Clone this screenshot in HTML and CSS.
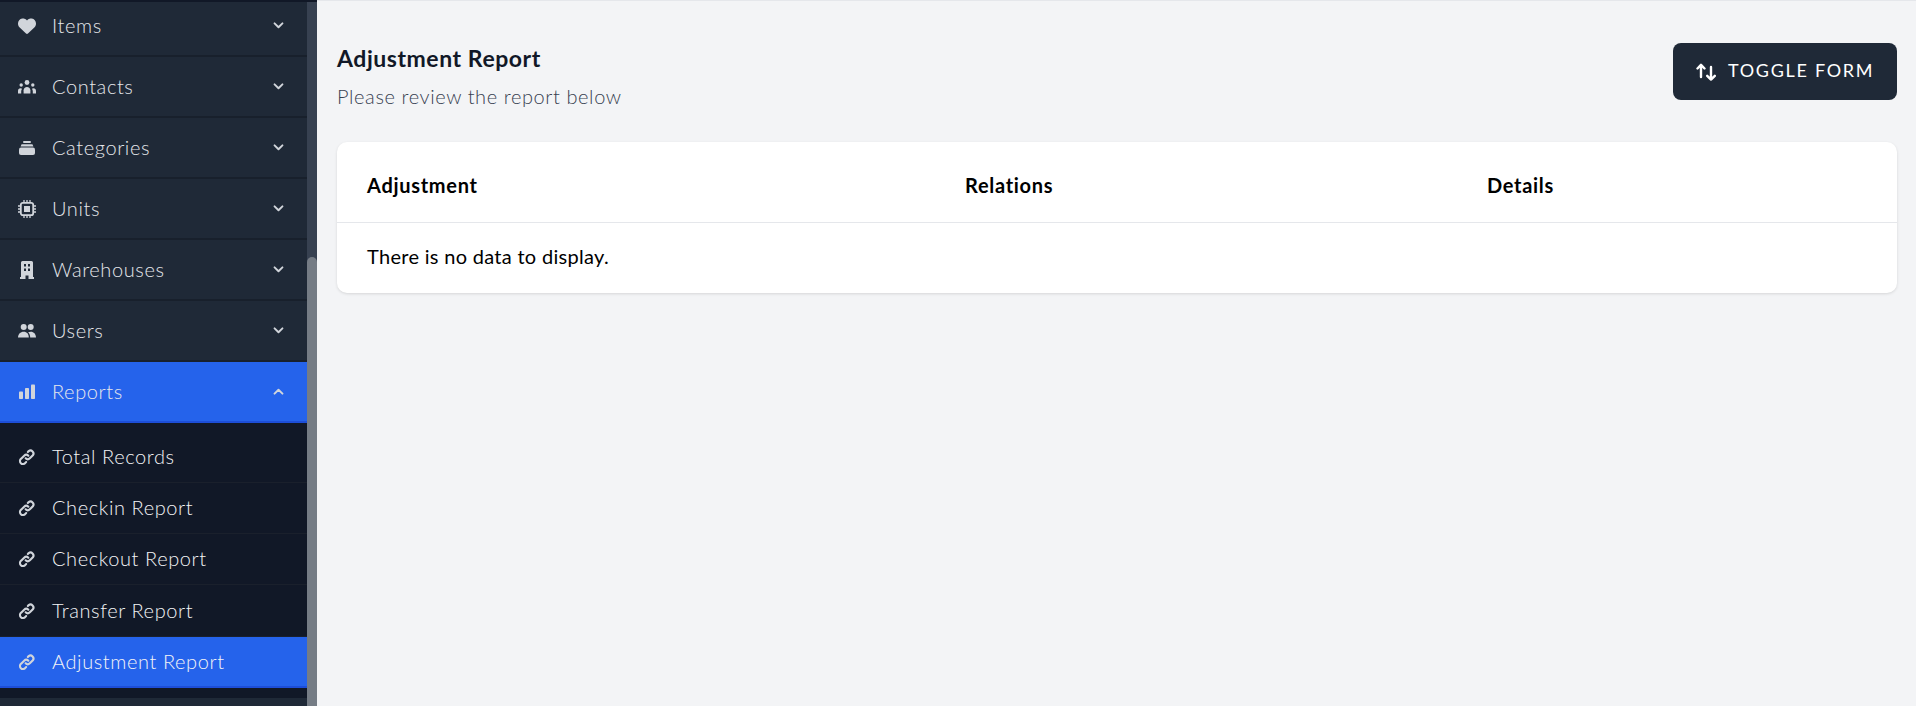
FILE: index.html
```html
<!DOCTYPE html>
<html lang="en">
<head>
    <meta charset="UTF-8">
    <title>Adjustment Report</title>
    <link rel="stylesheet" href="styles.css">
</head>
<body>
    <svg class="sprites" width="0" height="0">
        <symbol id="chev-down" viewBox="0 0 12 8"><path d="M1.500 1.500 6 6l4.500-4.500" fill="none" stroke="currentColor" stroke-width="2.200" stroke-linecap="round" stroke-linejoin="round"/></symbol>
        <symbol id="chev-up" viewBox="0 0 12 8"><path d="M1.500 6.500 6 2l4.500 4.500" fill="none" stroke="currentColor" stroke-width="2.200" stroke-linecap="round" stroke-linejoin="round"/></symbol>
        <symbol id="link" viewBox="0 0 24 24"><path d="M13.800 10.200a4 4 0 0 0-5.600 0l-4 4a4 4 0 1 0 5.600 5.600l1.100-1.100m-.7-4.900a4 4 0 0 0 5.600 0l4-4a4 4 0 0 0-5.600-5.600l-1.100 1.100" fill="none" stroke="currentColor" stroke-width="2.800" stroke-linecap="round"/></symbol>
    </svg>

    <!-- sidebar -->
    <aside class="sidebar">
        <nav class="menu">
            <a class="menu-item first">
                <svg class="icon" viewBox="0 0 512 512"><path fill="currentColor" d="M47.600 300.400L228.300 469.900c7.500 7 17.400 10.900 27.700 10.900s20.200-3.900 27.700-10.900L464.400 300.400c30.400-28.300 47.600-68 47.600-109.500v-5.800c0-69.900-50.500-129.500-119.400-141C347 36.500 300.600 51.400 268 84L256 96 244 84c-32.600-32.600-79-47.500-124.600-39.900C50.500 55.600 0 115.200 0 185.100v5.800c0 41.500 17.200 81.200 47.600 109.500z"/></svg>
                <span class="label">Items</span>
                <svg class="chev"><use href="#chev-down"/></svg>
            </a>
            <a class="menu-item">
                <svg class="icon" viewBox="0 0 18 18"><g fill="currentColor"><circle cx="9" cy="4.500" r="2.400"/><circle cx="3.200" cy="7" r="1.700"/><circle cx="14.800" cy="7" r="1.700"/><path d="M5.600 15.500v-3.200c0-2 1.500-3.400 3.400-3.400s3.400 1.400 3.400 3.400v3.200z"/><path d="M0 15.500v-2.600c0-1.600 1-2.700 2.400-2.700.7 0 1.200.2 1.700.5-.6.8-.9 1.700-.9 2.800v2z"/><path d="M18 15.500v-2.600c0-1.600-1-2.700-2.400-2.700-.7 0-1.200.2-1.700.5.6.8.9 1.700.9 2.800v2z"/></g></svg>
                <span class="label">Contacts</span>
                <svg class="chev"><use href="#chev-down"/></svg>
            </a>
            <a class="menu-item">
                <svg class="icon" viewBox="0 0 18 18"><g fill="currentColor"><rect x="5" y="2" width="8" height="2" rx="1"/><path d="M3.600 5.200h10.800l1 2.200H2.600z"/><rect x="1" y="8.400" width="16" height="7.600" rx="2"/></g></svg>
                <span class="label">Categories</span>
                <svg class="chev"><use href="#chev-down"/></svg>
            </a>
            <a class="menu-item">
                <svg class="icon" viewBox="0 0 18 18"><rect x="2.800" y="2.800" width="12.400" height="12.400" rx="2" fill="none" stroke="currentColor" stroke-width="1.800"/><rect x="6" y="6" width="6" height="6" fill="currentColor"/><path d="M6 0v2M9 0v2M12 0v2M6 16v2M9 16v2M12 16v2M0 6h2M0 9h2M0 12h2M16 6h2M16 9h2M16 12h2" stroke="currentColor" stroke-width="1.300"/></svg>
                <span class="label">Units</span>
                <svg class="chev"><use href="#chev-down"/></svg>
            </a>
            <a class="menu-item">
                <svg class="icon" viewBox="0 0 18 18"><path fill="currentColor" fill-rule="evenodd" d="M3 1.500A1.500 1.500 0 0 1 4.500 0h9A1.500 1.500 0 0 1 15 1.500V16h1v2h-5.500v-3.500h-3V18H2v-2h1zM6 3v2.500h2V3zm4 0v2.500h2V3zM6 7.500V10h2V7.500zm4 0V10h2V7.500z"/></svg>
                <span class="label">Warehouses</span>
                <svg class="chev"><use href="#chev-down"/></svg>
            </a>
            <a class="menu-item">
                <svg class="icon" viewBox="0 0 18 18"><g fill="currentColor"><circle cx="5.700" cy="5" r="3"/><circle cx="12.700" cy="5" r="3"/><path d="M0 15.500c0-3.400 2.400-5.700 5.700-5.700s5.100 2.300 5.100 5.700z"/><path d="M12.200 15.500c0-2.200-.8-4-2.100-5.200.8-.3 1.700-.5 2.700-.5 3 0 5.200 2.300 5.200 5.700z"/></g></svg>
                <span class="label">Users</span>
                <svg class="chev"><use href="#chev-down"/></svg>
            </a>
            <a class="menu-item active">
                <svg class="icon" viewBox="0 0 18 18"><g fill="currentColor"><rect x="1" y="8.500" width="4" height="7.500" rx=".8"/><rect x="7" y="5" width="4" height="11" rx=".8"/><rect x="13" y="1.500" width="4" height="14.500" rx=".8"/></g></svg>
                <span class="label">Reports</span>
                <svg class="chev"><use href="#chev-up"/></svg>
            </a>
            <div class="submenu">
                <a class="sub-item"><svg class="icon"><use href="#link"/></svg><span class="label">Total Records</span></a>
                <a class="sub-item"><svg class="icon"><use href="#link"/></svg><span class="label">Checkin Report</span></a>
                <a class="sub-item"><svg class="icon"><use href="#link"/></svg><span class="label">Checkout Report</span></a>
                <a class="sub-item tall"><svg class="icon"><use href="#link"/></svg><span class="label">Transfer Report</span></a>
                <a class="sub-item active"><svg class="icon"><use href="#link"/></svg><span class="label">Adjustment Report</span></a>
            </div>
        </nav>
        <div class="scroll-track"><div class="scroll-thumb"></div></div>
    </aside>

    <!-- page content -->
    <main class="content">
        <header class="page-head">
            <div>
                <h1>Adjustment Report</h1>
                <p>Please review the report below</p>
            </div>
            <button type="button" class="toggle-btn">
                <svg viewBox="0 0 20 18" width="20" height="18"><path d="M5 14V2M1.500 5.500 5 1.800l3.500 3.700M15 4v12.500M11.200 12.800 15 16.600l3.800-3.800" fill="none" stroke="currentColor" stroke-width="2.400" stroke-linecap="round" stroke-linejoin="round"/></svg>
                <span class="btn-text">TOGGLE FORM</span>
            </button>
        </header>

        <section class="card">
            <div class="table-head">
                <div>Adjustment</div>
                <div>Relations</div>
                <div>Details</div>
            </div>
            <div class="table-empty">There is no data to display.</div>
        </section>
    </main>
</body>
</html>
```

FILE: styles.css
```css
/* Reset */
* {
    margin: 0;
    padding: 0;
    box-sizing: border-box;
}

body {
    font-family: 'Lato', 'Open Sans', sans-serif;
    background-color: #f3f4f6;
    display: flex;
    height: 706px;
    overflow: hidden;
}

.sprites {
    position: absolute;
}

/* Sidebar */
.sidebar {
    width: 317px;
    flex-shrink: 0;
    display: flex;
    height: 706px;
    border-top: 2px solid #111827;
}

.menu {
    width: 307px;
    background-color: #1f2937;
    overflow: hidden;
}

.menu-item {
    display: flex;
    align-items: center;
    height: 61px;
    padding: 0 23px 0 18px;
    color: #e5e7eb;
    font-size: 20px;
    font-weight: 300;
    letter-spacing: 0.6px;
    border-bottom: 2px solid #18202c;
}

.menu-item .icon,
.sub-item .icon {
    color: #d1d5db;
}

.menu-item.first {
    height: 55px;
    padding-bottom: 6px;
}

.menu-item.active {
    background-color: #2563eb;
    border-bottom-color: #1d4ed8;
}

.icon {
    width: 18px;
    height: 18px;
    flex-shrink: 0;
    margin-right: 16px;
}

.label {
    flex: 1;
    margin-bottom: 2px;
}

.chev {
    width: 11px;
    height: 7px;
    color: #d1d5db;
}

.submenu {
    background-color: #111827;
    padding-bottom: 10px;
}

.sub-item {
    display: flex;
    align-items: center;
    height: 51px;
    padding: 0 18px;
    color: #f3f4f6;
    font-size: 20px;
    font-weight: 300;
    letter-spacing: 0.6px;
    border-bottom: 1px solid #1a202c;
}

.sub-item:first-child {
    height: 60px;
    padding-top: 8px;
}

.sub-item.tall {
    height: 52px;
}

.sub-item.active {
    background-color: #2563eb;
    border-bottom: 2px solid #1d4ed8;
}

.scroll-track {
    width: 10px;
    background-color: #374151;
    padding-top: 255px;
}

.scroll-thumb {
    height: 100%;
    background-color: #757c85;
    border-radius: 5px 5px 0 0;
}

/* Content */
.content {
    flex: 1;
    padding: 42px 19px 0 20px;
    border-top: 1px solid #e5e7eb;
}

.page-head {
    display: flex;
    justify-content: space-between;
    align-items: flex-start;
    margin-bottom: 32px;
}

.page-head h1 {
    font-size: 23px;
    font-weight: 700;
    line-height: 28px;
    letter-spacing: 0.55px;
    color: #111827;
    margin-top: 1px;
}

.page-head p {
    font-size: 20px;
    font-weight: 300;
    line-height: 28px;
    color: #374151;
    letter-spacing: 0.6px;
    margin-top: 10px;
}

.toggle-btn {
    display: flex;
    align-items: center;
    gap: 12px;
    width: 224px;
    height: 57px;
    padding-left: 23px;
    background-color: #1f2937;
    color: #ffffff;
    border: none;
    border-radius: 8px;
    font-family: inherit;
    font-size: 18px;
    letter-spacing: 1.7px;
}

.btn-text {
    margin-bottom: 4px;
}

.card {
    background-color: #ffffff;
    border-radius: 10px;
    box-shadow: 0 1px 3px rgba(0, 0, 0, 0.12);
    height: 151px;
}

.table-head {
    display: grid;
    grid-template-columns: 598px 522px 1fr;
    align-items: center;
    height: 81px;
    padding: 6px 0 0 30px;
    border-bottom: 1px solid #e5e7eb;
    font-size: 20px;
    font-weight: 700;
    letter-spacing: 0.7px;
    color: #000000;
}

.table-empty {
    padding: 19px 30px;
    font-size: 20px;
    line-height: 28px;
    letter-spacing: 0.3px;
    color: #000000;
}
```
